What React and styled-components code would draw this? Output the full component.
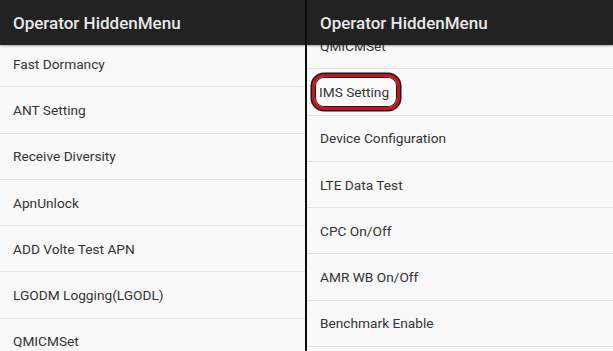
import React from "react";
import styled, { createGlobalStyle } from "styled-components";

const GlobalStyle = createGlobalStyle`
  html, body {
    margin: 0;
    padding: 0;
    background: #000;
  }
  body {
    font-family: Roboto, "Liberation Sans", Arial, sans-serif;
  }
`;

const Screen = styled.div`
  display: flex;
  width: 613px;
  height: 351px;
  overflow: hidden;
  background: #000;
`;

const Pane = styled.div`
  position: relative;
  display: flex;
  flex-direction: column;
  width: ${(props) => props.width}px;
  height: 100%;
  overflow: hidden;
  background: #f9f9f9;
`;

const Split = styled.div`
  width: 2px;
  background: #0a0a0a;
  flex-shrink: 0;
`;

const Header = styled.div`
  position: relative;
  z-index: 2;
  flex-shrink: 0;
  height: 45px;
  display: flex;
  align-items: center;
  padding-left: 13px;
  background: #222222;
  color: #e9e9e9;
  font-size: 17px;
  font-weight: 500;
  box-shadow: 0 1px 2px rgba(0, 0, 0, 0.35);
`;

const List = styled.div`
  display: flex;
  flex-direction: column;
  margin-top: ${(props) => props.offset}px;
`;

const Row = styled.div`
  box-sizing: border-box;
  flex-shrink: 0;
  height: 46.3px;
  display: flex;
  align-items: center;
  padding-left: 13px;
  border-bottom: 1.5px solid #e3e3e3;
  color: #333333;
  font-size: 13.7px;
`;

const Highlight = styled.span`
  margin-left: -8px;
  padding: 7px 8px 7px 4px;
  border: 3px solid #c8141c;
  border-radius: 12px;
  box-shadow: 0 0 0 1.5px #1a1a1a, inset 0 0 0 1px #1a1a1a;
  background: #fbfbfb;
`;

const leftItems = [
  "Fast Dormancy",
  "ANT Setting",
  "Receive Diversity",
  "ApnUnlock",
  "ADD Volte Test APN",
  "LGODM Logging(LGODL)",
  "QMICMSet",
];

const rightItems = [
  "QMICMSet",
  "IMS Setting",
  "Device Configuration",
  "LTE Data Test",
  "CPC On/Off",
  "AMR WB On/Off",
  "Benchmark Enable",
  "",
];

const App = () => {
  return (
    <>
      <GlobalStyle />
      <Screen>
        <Pane width={305}>
          <Header>Operator HiddenMenu</Header>
          <List offset={-4}>
            {leftItems.map((item) => (
              <Row key={item}>{item}</Row>
            ))}
          </List>
        </Pane>
        <Split />
        <Pane width={306}>
          <Header>Operator HiddenMenu</Header>
          <List offset={-22}>
            {rightItems.map((item, i) => (
              <Row key={i}>
                {item === "IMS Setting" ? <Highlight>{item}</Highlight> : item}
              </Row>
            ))}
          </List>
        </Pane>
      </Screen>
    </>
  );
};

export default App;
